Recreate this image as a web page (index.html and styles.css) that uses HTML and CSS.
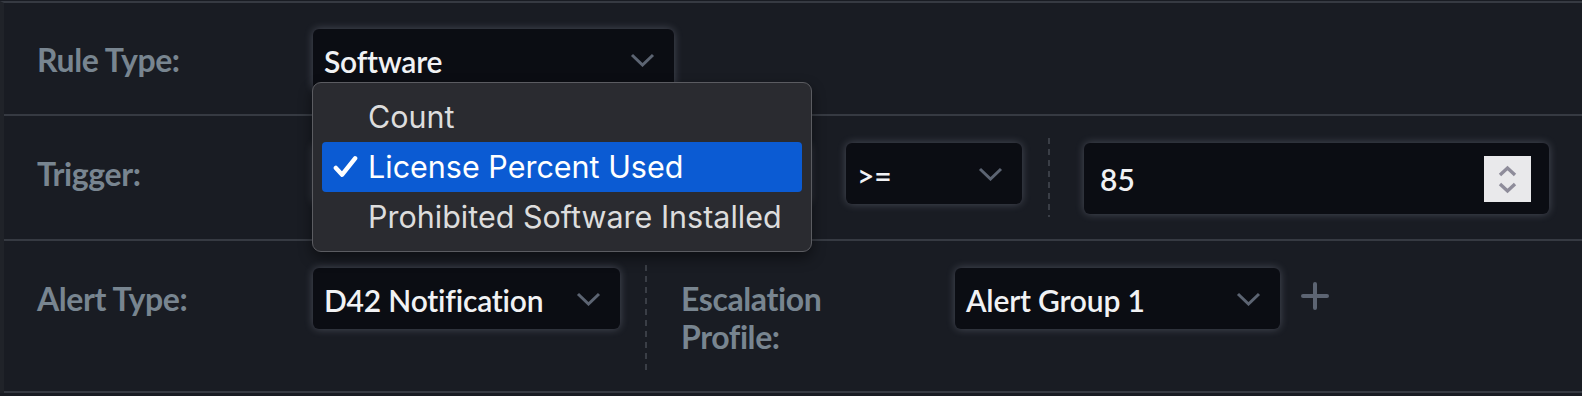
FILE: index.html
```html
<!DOCTYPE html>
<html>
<head>
<meta charset="utf-8">
<link rel="stylesheet" href="styles.css">
</head>
<body>
<div class="panel">
  <div class="row row1">
    <div class="label">Rule Type:</div>
    <div class="select sel-rule">
      <span>Software</span>
      <svg class="chev" viewBox="0 0 25 14"><polyline points="2,2 12.5,12 23,2"/></svg>
    </div>
  </div>
  <div class="row row2">
    <div class="label">Trigger:</div>
    <div class="select sel-trigger"></div>
    <div class="select sel-op">
      <span>&gt;=</span>
      <svg class="chev" viewBox="0 0 25 14"><polyline points="2,2 12.5,12 23,2"/></svg>
    </div>
    <div class="vdash dash2"></div>
    <div class="number">
      <span>85</span>
      <div class="spin">
        <svg viewBox="0 0 47 46"><polyline points="16,19 23.5,12 31,19"/><polyline points="16,28 23.5,35 31,28"/></svg>
      </div>
    </div>
  </div>
  <div class="row row3">
    <div class="label">Alert Type:</div>
    <div class="select sel-alert">
      <span>D42 Notification</span>
      <svg class="chev" viewBox="0 0 25 14"><polyline points="2,2 12.5,12 23,2"/></svg>
    </div>
    <div class="vdash dash3"></div>
    <div class="label2">Escalation<br>Profile:</div>
    <div class="select sel-esc">
      <span>Alert Group 1</span>
      <svg class="chev" viewBox="0 0 25 14"><polyline points="2,2 12.5,12 23,2"/></svg>
    </div>
    <svg class="plus" viewBox="0 0 28 28"><line x1="14" y1="2" x2="14" y2="26"/><line x1="2" y1="14" x2="26" y2="14"/></svg>
  </div>

  <div class="menu">
    <div class="item">Count</div>
    <div class="item active">
      <svg class="check" viewBox="0 0 26 24"><path d="M3 13 L9.5 20 L23 3"/></svg>
      License Percent Used
    </div>
    <div class="item">Prohibited Software Installed</div>
  </div>
</div>
</body>
</html>
```

FILE: styles.css
```css
html, body {
  margin: 0;
  padding: 0;
}
body {
  width: 1582px;
  height: 396px;
  overflow: hidden;
  background: #191c23;
  font-family: "Lato", "Open Sans", sans-serif;
}
.panel {
  position: relative;
  margin-top: 1px;
  border-top: 2px solid #363a42;
  border-left: 4px solid #202329;
}
.row {
  display: flex;
  align-items: flex-start;
  box-sizing: border-box;
  padding-left: 33px;
  border-bottom: 2px solid #363a42;
}
.row1 { height: 113px; padding-top: 26px; }
.row2 { height: 125px; padding-top: 27px; }
.row3 { height: 152px; padding-top: 27px; }

.label {
  width: 276px;
  flex: none;
  height: 61px;
  line-height: 61px;
  font-size: 32px;
  font-weight: 700;
  color: #788590;
  letter-spacing: -0.4px;
}
.label2 {
  width: 274px;
  flex: none;
  margin-left: 34px;
  padding-top: 12px;
  line-height: 38px;
  font-size: 32px;
  font-weight: 700;
  color: #788590;
  letter-spacing: -0.4px;
}
.select {
  flex: none;
  box-sizing: border-box;
  height: 61px;
  display: flex;
  align-items: center;
  justify-content: space-between;
  padding: 0 19px 0 11px;
  background: #0b0d13;
  border-radius: 6px;
  box-shadow: 0 0 8px rgba(200, 210, 230, 0.28);
  color: #f1f2f4;
  font-size: 30px;
  font-weight: 600;
  letter-spacing: -0.2px;
}
.select span { padding-top: 2px; }
.chev {
  width: 25px;
  height: 14px;
  fill: none;
  stroke: #5c6472;
  stroke-width: 3;
}
.sel-rule { width: 361px; }
.sel-trigger { width: 497px; }
.sel-op { width: 176px; margin-left: 36px; }
.sel-alert { width: 307px; }
.sel-esc { width: 325px; }

.vdash {
  flex: none;
  width: 2px;
  background: repeating-linear-gradient(to bottom, #3a3e46 0 6px, transparent 6px 11px);
}
.dash2 { height: 79px; margin-top: -5px; margin-left: 26px; }
.dash3 { height: 109px; margin-top: -3px; margin-left: 25px; }

.number {
  flex: none;
  box-sizing: border-box;
  width: 465px;
  height: 71px;
  margin-left: 34px;
  display: flex;
  align-items: center;
  justify-content: space-between;
  padding: 0 18px 0 16px;
  background: #0b0d13;
  border-radius: 6px;
  box-shadow: 0 0 8px rgba(200, 210, 230, 0.28);
  color: #f1f2f4;
  font-size: 30px;
  font-weight: 600;
}
.spin {
  width: 47px;
  height: 46px;
  background: #e9e9eb;
}
.spin svg {
  display: block;
  width: 47px;
  height: 46px;
  fill: none;
  stroke: #8e8c9a;
  stroke-width: 3.4;
}
.plus {
  flex: none;
  width: 28px;
  height: 28px;
  margin-left: 21px;
  margin-top: 14px;
  stroke: #5c6472;
  stroke-width: 4;
  stroke-linecap: round;
}

.menu {
  position: absolute;
  left: 308px;
  top: 79px;
  width: 500px;
  box-sizing: border-box;
  padding: 9px;
  background: #2a2b30;
  border: 1px solid #5b5c61;
  border-radius: 9px;
  box-shadow: 0 6px 14px rgba(0, 0, 0, 0.45);
  font-family: "Inter", "Roboto", sans-serif;
  font-size: 30.5px;
  color: #dddddd;
}
.item {
  position: relative;
  height: 50px;
  line-height: 50px;
  padding-left: 46px;
  border-radius: 4px;
}
.item.active {
  background: #0b5bd3;
  color: #ffffff;
}
.check {
  position: absolute;
  left: 11px;
  top: 13px;
  width: 25px;
  height: 24px;
  fill: none;
  stroke: #ffffff;
  stroke-width: 4.6;
  stroke-linecap: round;
  stroke-linejoin: round;
}
```
